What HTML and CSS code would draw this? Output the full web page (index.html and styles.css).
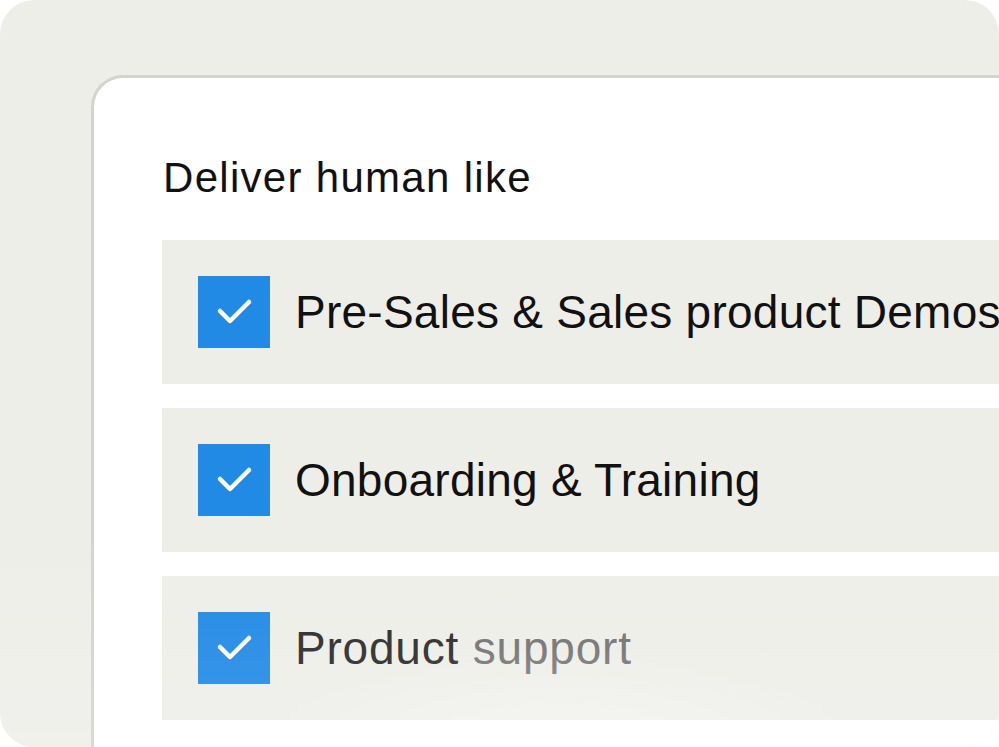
FILE: index.html
```html
<!DOCTYPE html>
<html lang="en">
<head>
<meta charset="utf-8">
<title>Deliver human like</title>
<link rel="stylesheet" href="styles.css">
</head>
<body>
<div class="frame">
  <div class="card">
    <h1 class="title">Deliver human like</h1>
    <ul class="list">
      <li class="row">
        <span class="check"><svg viewBox="0 0 72 72" width="72" height="72"><path d="M22 35 L32 45 L51 26" fill="none" stroke="#fff" stroke-width="4.5" stroke-linecap="round" stroke-linejoin="round"/></svg></span>
        <span class="label">Pre-Sales &amp; Sales product Demos</span>
      </li>
      <li class="row">
        <span class="check"><svg viewBox="0 0 72 72" width="72" height="72"><path d="M22 35 L32 45 L51 26" fill="none" stroke="#fff" stroke-width="4.5" stroke-linecap="round" stroke-linejoin="round"/></svg></span>
        <span class="label">Onboarding &amp; Training</span>
      </li>
      <li class="row">
        <span class="check"><svg viewBox="0 0 72 72" width="72" height="72"><path d="M22 35 L32 45 L51 26" fill="none" stroke="#fff" stroke-width="4.5" stroke-linecap="round" stroke-linejoin="round"/></svg></span>
        <span class="label label-fade">Product <span class="soft">support</span></span>
      </li>
    </ul>
  </div>
  <div class="glow"></div>
</div>
</body>
</html>
```

FILE: styles.css
```css
* { box-sizing: border-box; }
html, body { margin: 0; padding: 0; background: #ffffff; }
body { font-family: "Liberation Sans", Arial, sans-serif; }

.frame {
  position: relative;
  width: 999px;
  height: 747px;
  background: #eeeee9;
  border-radius: 34px;
  overflow: hidden;
  padding: 75px 0 0 91px;
}

.card {
  width: 960px;
  height: 700px;
  background: #ffffff;
  border: 3px solid #d3d3cf;
  border-right: none;
  border-bottom: none;
  border-top-left-radius: 32px;
  padding: 75px 0 0 68px;
}

.title {
  margin: 0 0 37px 1px;
  font-weight: 400;
  font-size: 42px;
  line-height: 50px;
  color: #111111;
  letter-spacing: 1.3px;
}

.list {
  list-style: none;
  margin: 0;
  padding: 0;
  display: flex;
  flex-direction: column;
  gap: 24px;
}

.row {
  height: 144px;
  background: #eeeee9;
  display: flex;
  align-items: center;
  padding-left: 36px;
  gap: 25px;
}

.check {
  width: 72px;
  height: 72px;
  background: #218ae5;
  display: flex;
  flex: none;
}

.label {
  font-size: 46px;
  line-height: 56px;
  color: #111111;
  white-space: nowrap;
  letter-spacing: 0.25px;
}

.label-fade { color: #2b2b2b; letter-spacing: 0.8px; }
.soft { color: #737373; }

.glow {
  position: absolute;
  left: 0;
  right: 0;
  bottom: 0;
  height: 220px;
  pointer-events: none;
  background:
    radial-gradient(ellipse 320px 110px at 560px 230px, rgba(255,255,255,0.35), rgba(255,255,255,0) 100%),
    linear-gradient(to bottom, rgba(255,255,255,0) 0%, rgba(255,255,255,0.12) 100%);
}
```
